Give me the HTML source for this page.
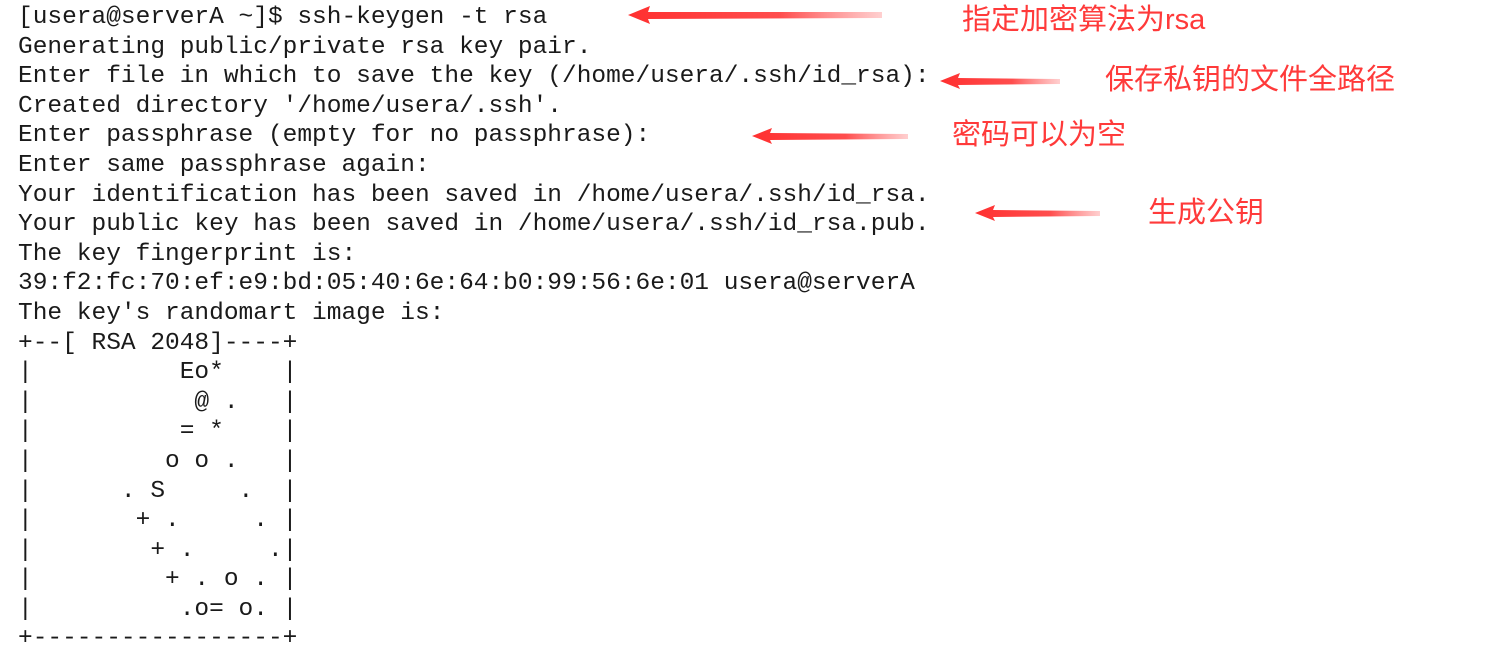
<!DOCTYPE html>
<html><head><meta charset="utf-8"><style>
html,body{margin:0;padding:0;background:#fff;width:1493px;height:652px;overflow:hidden;position:relative}
pre{position:absolute;left:18px;top:3px;margin:0;font-family:"Liberation Mono",monospace;font-size:24.5px;line-height:29.6px;color:#1a1a1a;letter-spacing:0}
.l{position:absolute;font-family:"Liberation Sans","Noto Sans CJK SC",sans-serif;font-size:29px;color:#ff3a3a;line-height:1;white-space:nowrap}
svg{position:absolute;left:0;top:0}
</style></head><body>
<pre>[usera@serverA ~]$ ssh-keygen -t rsa
Generating public/private rsa key pair.
Enter file in which to save the key (/home/usera/.ssh/id_rsa):
Created directory '/home/usera/.ssh'.
Enter passphrase (empty for no passphrase):
Enter same passphrase again:
Your identification has been saved in /home/usera/.ssh/id_rsa.
Your public key has been saved in /home/usera/.ssh/id_rsa.pub.
The key fingerprint is:
39:f2:fc:70:ef:e9:bd:05:40:6e:64:b0:99:56:6e:01 usera@serverA
The key's randomart image is:
+--[ RSA 2048]----+
|          Eo*    |
|           @ .   |
|          = *    |
|         o o .   |
|      . S     .  |
|       + .     . |
|        + .     .|
|         + . o . |
|          .o= o. |
+-----------------+</pre>
<svg width="1493" height="652">
<defs><linearGradient id="g" x1="0" x2="1"><stop offset="0" stop-color="#ff3030"/><stop offset="0.6" stop-color="#ff3a3a" stop-opacity="0.9"/><stop offset="1" stop-color="#ff6060" stop-opacity="0.3"/></linearGradient></defs>
<g fill="url(#g)">
<polygon points="628,15 650,6 648,12 882,12 882,18 648,19 650,24"/>
<polygon points="940,81 960,73 958,78 1060,79 1060,84 958,85 960,89"/>
<polygon points="752,136 772,128 770,133 908,134 908,139 770,140 772,144"/>
<polygon points="975,213 995,205 993,210 1100,211 1100,216 993,217 995,221"/>
</g></svg>
<div class="l" style="left:962px;top:6px">指定加密算法为rsa</div>
<div class="l" style="left:1105px;top:66px">保存私钥的文件全路径</div>
<div class="l" style="left:952px;top:121px">密码可以为空</div>
<div class="l" style="left:1148px;top:199px">生成公钥</div>
</body></html>
